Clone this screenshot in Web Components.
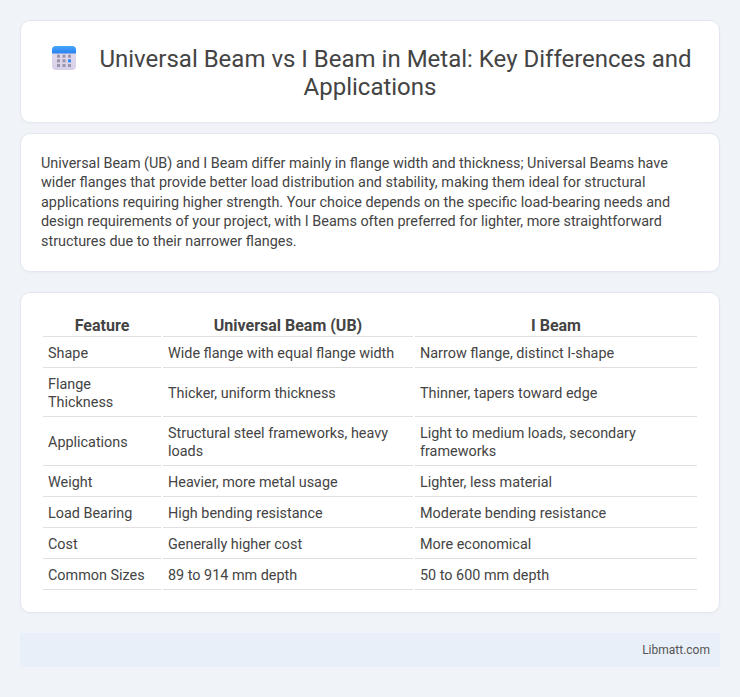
<!DOCTYPE html>
<html lang="en"><head><meta charset="utf-8"><title>Universal Beam vs I Beam</title>
<style>
html,body{margin:0;padding:0;background:#f0f4f9}
body{font-family:Roboto,"Liberation Sans",sans-serif;color:#444}
</style></head><body>
<page-shell>
<title-card heading="Universal Beam vs I Beam in Metal: Key Differences and Applications"></title-card>
<summary-card>Universal Beam (UB) and I Beam differ mainly in flange width and thickness; Universal Beams have wider flanges that provide better load distribution and stability, making them ideal for structural applications requiring higher strength. Your choice depends on the specific load-bearing needs and design requirements of your project, with I Beams often preferred for lighter, more straightforward structures due to their narrower flanges.</summary-card>
<compare-table></compare-table>
<site-footer>Libmatt.com</site-footer>
</page-shell>
<script>
function def(name, css, html, init){
  customElements.define(name, class extends HTMLElement{
    constructor(){super();const r=this.attachShadow({mode:'open'});r.innerHTML='<style>'+css+'</style>'+(typeof html==='function'?html(this):html);}
    connectedCallback(){ if(init) init(this); }
  });
}
const card=':host{display:block;background:#fff;border:1px solid #e3e7ef;border-radius:10px;box-shadow:0 1px 3px rgba(0,0,0,.03);box-sizing:border-box}';
def('page-shell',':host{display:flex;flex-direction:column;padding:20px 20px 30px;font-size:14.4px;line-height:19.44px}','<slot></slot>');
def('title-card',card+':host{padding:24.4px 20px 20.6px;margin-bottom:10px}h1{margin:0;font:400 24px/28px Roboto,sans-serif;color:#444;text-align:center}svg{width:24px;height:24px;vertical-align:-3px;margin:0 23px 0 4px}',
 ()=>'',
 el=>{const h=el.getAttribute('heading');el.shadowRoot.innerHTML+=`<h1><svg viewBox="0 0 24 24" aria-hidden="true">
 <defs><linearGradient id="g" x1="0" y1="0" x2="0" y2="1"><stop offset="0" stop-color="#e6dff0"/><stop offset="1" stop-color="#d8cee8"/></linearGradient>
 <linearGradient id="b" x1="0" y1="0" x2="0" y2="1"><stop offset="0" stop-color="#45a6fb"/><stop offset="1" stop-color="#2b7fef"/></linearGradient></defs>
 <rect width="24" height="24" rx="4" fill="url(#g)"/>
 <path d="M0 7.5V4a4 4 0 0 1 4-4h16a4 4 0 0 1 4 4v3.5z" fill="url(#b)"/>
 <g fill="#9a95a8"><rect x="5" y="8.7" width="3" height="3"/><rect x="10.5" y="8.7" width="3" height="3"/><rect x="16" y="8.7" width="3" height="3"/>
 <rect x="5" y="13.3" width="3" height="3"/><rect x="10.5" y="13.3" width="3" height="3"/>
 <rect x="5" y="18" width="3" height="3"/><rect x="10.5" y="18" width="3" height="3"/><rect x="16" y="18" width="3" height="3"/></g>
 <rect x="16" y="13.3" width="3" height="3" fill="#2f8af5"/></svg>${h}</h1>`;});
def('summary-card',card+':host{padding:20px;margin-bottom:20px}','<slot></slot>');
def('compare-table',card+`:host{padding:20px;margin-bottom:20px}
table{width:100%;border-collapse:separate;border-spacing:2px;font-size:14.4px;line-height:18px;table-layout:fixed}
th{font-weight:700;font-size:16px;padding:1px 5px 0;border-bottom:1px solid #e0e0e0;text-align:center;color:#444;line-height:20px}
td{padding:6px 5px 4px;border-bottom:1px solid #e0e0e0;color:#444;vertical-align:middle}
col.a{width:118px}col.b{width:250px}`,
 ()=>{
  const rows=[['Shape','Wide flange with equal flange width','Narrow flange, distinct I-shape'],['Flange Thickness','Thicker, uniform thickness','Thinner, tapers toward edge'],['Applications','Structural steel frameworks, heavy loads','Light to medium loads, secondary frameworks'],['Weight','Heavier, more metal usage','Lighter, less material'],['Load Bearing','High bending resistance','Moderate bending resistance'],['Cost','Generally higher cost','More economical'],['Common Sizes','89 to 914 mm depth','50 to 600 mm depth']];
  return '<table><colgroup><col class="a"><col class="b"><col></colgroup><thead><tr><th>Feature</th><th>Universal Beam (UB)</th><th>I Beam</th></tr></thead><tbody>'+rows.map(r=>'<tr>'+r.map(c=>'<td>'+c+'</td>').join('')+'</tr>').join('')+'</tbody></table>';
 });
def('site-footer',':host{display:block;background:#e8eff8;padding:8px 10px;text-align:right;font-size:12px;line-height:18px;color:#555}','<slot></slot>');
</script>
</body></html>
